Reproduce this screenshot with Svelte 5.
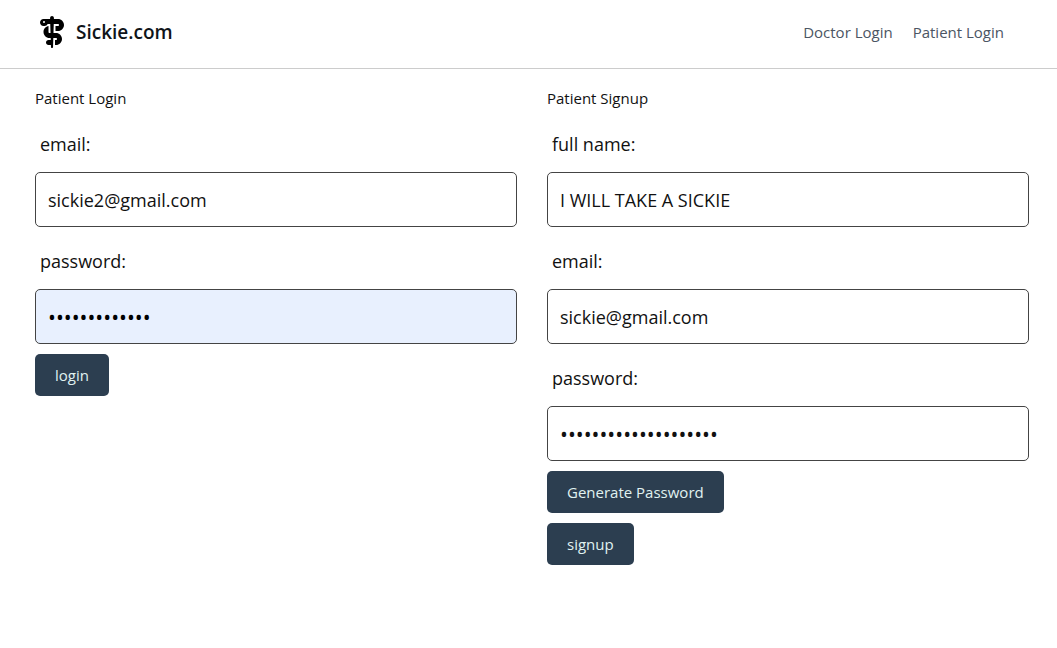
<script>
  let loginEmail = $state('sickie2@gmail.com');
  let loginPassword = $state('sickieleave13');
  let fullName = $state('I WILL TAKE A SICKIE');
  let signupEmail = $state('sickie@gmail.com');
  let signupPassword = $state('q7Rk2mZx9Lw4Tb8Vn3Hs');

  function generatePassword() {
    const chars = 'ABCDEFGHJKLMNPQRSTUVWXYZabcdefghijkmnpqrstuvwxyz23456789';
    signupPassword = Array.from({ length: 20 }, () => chars[Math.floor(Math.random() * chars.length)]).join('');
  }
</script>

<header>
  <a class="brand" href="#home">
    <svg viewBox="0 0 384 512" width="24" height="32" aria-hidden="true">
      <path d="M222.6 43.2l-.1 4.8H288c53 0 96 43 96 96s-43 96-96 96H248V160h40c8.8 0 16-7.2 16-16s-7.2-16-16-16H248 220l-4.500 144H256c53 0 96 43 96 96s-43 96-96 96H240V384h16c8.800 0 16-7.200 16-16s-7.200-16-16-16H213l-3.100 99.500L208.500 495l0 1c-.3 8.900-7.600 16-16.500 16s-16.200-7.100-16.500-16l0-1-1-31H136c-22.100 0-40-17.900-40-40s17.900-40 40-40h36l-1-32H152c-53 0-96-43-96-96c0-47.600 34.600-87.100 80-94.700V256c0 8.800 7.200 16 16 16h16.500L164 128H136 122.600c-9 18.900-28.300 32-50.600 32H56c-30.900 0-56-25.100-56-56S25.100 48 56 48h8 8 89.500l-.1-4.800L161 32c0-.7 0-1.300 0-1.900c.5-16.600 14.100-30 31-30s30.500 13.400 31 30c0 .6 0 1.300 0 1.900l-.4 11.200zM64 112a16 16 0 1 0 0-32 16 16 0 1 0 0 32z" />
    </svg>
    <span>Sickie.com</span>
  </a>
  <nav>
    <a href="#doctor">Doctor Login</a>
    <a href="#patient">Patient Login</a>
  </nav>
</header>

<main>
  <form onsubmit={(e) => e.preventDefault()}>
    <h2>Patient Login</h2>
    <div class="field">
      <label for="login-email">email:</label>
      <input id="login-email" type="email" bind:value={loginEmail} />
    </div>
    <div class="field">
      <label for="login-password">password:</label>
      <input id="login-password" class="filled" type="password" bind:value={loginPassword} />
    </div>
    <button type="submit">login</button>
  </form>

  <form onsubmit={(e) => e.preventDefault()}>
    <h2>Patient Signup</h2>
    <div class="field">
      <label for="full-name">full name:</label>
      <input id="full-name" type="text" bind:value={fullName} />
    </div>
    <div class="field">
      <label for="signup-email">email:</label>
      <input id="signup-email" type="email" bind:value={signupEmail} />
    </div>
    <div class="field">
      <label for="signup-password">password:</label>
      <input id="signup-password" type="password" bind:value={signupPassword} />
    </div>
    <button type="button" onclick={generatePassword}>Generate Password</button>
    <button type="submit">signup</button>
  </form>
</main>

<style>
  :global(body) {
    margin: 0;
    background: #fff;
    color: #111;
    font-family: 'Segoe UI', 'Open Sans', sans-serif;
    font-size: 15px;
    font-weight: 400;
  }

  header {
    display: flex;
    align-items: center;
    justify-content: space-between;
    padding: 16px 53px 20px 40px;
    border-bottom: 1px solid #ccc;
  }

  .brand {
    display: flex;
    align-items: center;
    gap: 12px;
    color: #0f1419;
    font-size: 19px;
    font-weight: 600;
    line-height: 32px;
    text-decoration: none;
  }

  nav {
    display: flex;
    gap: 20px;
  }

  nav a {
    color: #4b5563;
    line-height: 32px;
    text-decoration: none;
  }

  main {
    display: grid;
    grid-template-columns: 1fr 1fr;
    gap: 30px;
    padding: 18px 28px 20px 35px;
  }

  form {
    display: flex;
    flex-direction: column;
    align-items: flex-start;
    gap: 10px;
  }

  h2 {
    margin: 0;
    font-size: 15px;
    font-weight: 400;
    line-height: 23px;
  }

  .field {
    display: flex;
    flex-direction: column;
    width: 100%;
  }

  label {
    padding: 10px 5px 14px;
    font-size: 18px;
    line-height: 28px;
  }

  input {
    box-sizing: border-box;
    width: 100%;
    height: 55px;
    padding: 0 12px;
    border: 1px solid #444;
    border-radius: 5px;
    background: #fff;
    color: #111;
    font: inherit;
    font-size: 18px;
  }

  input[type='password'] {
    font-size: 21px;
  }

  .filled {
    background: #e8f0fe;
    color: #000;
  }

  button {
    height: 42px;
    padding: 0 20px;
    border: 0;
    border-radius: 5px;
    background: #2c3e50;
    color: #e0f2f1;
    font: inherit;
    cursor: pointer;
  }
</style>
